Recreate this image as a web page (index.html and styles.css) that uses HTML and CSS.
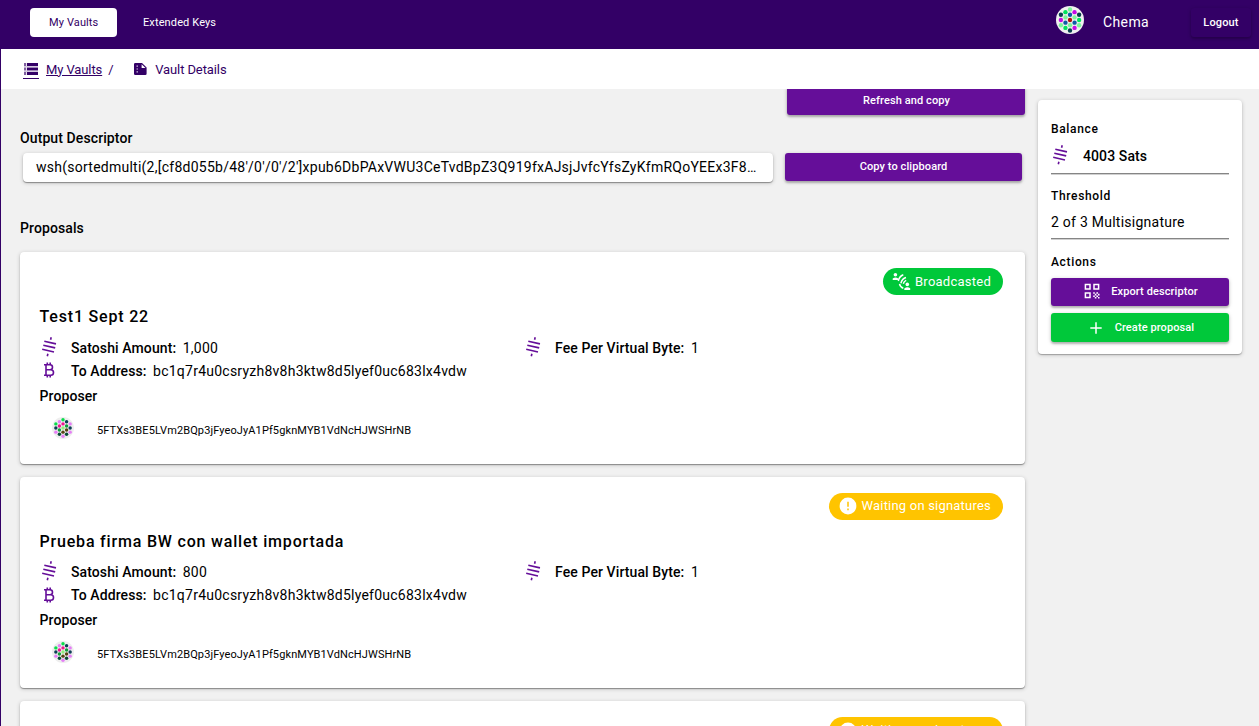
FILE: index.html
```html
<!DOCTYPE html>
<html lang="en">
<head>
<meta charset="utf-8">
<title>Vault Details</title>
<link rel="stylesheet" href="styles.css">
</head>
<body>
<svg class="defs" width="0" height="0">
  <symbol id="sats" viewBox="0 0 18 22"><path d="M11.200 1.300L10.600 3.800M4.300 5.200L16 7.900M3.300 9.200L15.200 11.900M2.200 13.200L14 16M7.900 17.700L7.300 20.300" fill="none" stroke="#650e99" stroke-width="1.600"/></symbol>
  <symbol id="btc" viewBox="0 0 12 16"><path d="M1 2.800H7a2.400 2.400 0 0 1 0 5H3M3 7.800H7.800a2.700 2.700 0 0 1 0 5.400H1M3 2.800V13.200M4.300 .6V2.800M7.200 .6V2.800M4.300 13.200V15.400M7.200 13.200V15.400" fill="none" stroke="#650e99" stroke-width="1.600"/></symbol>
  <symbol id="warn" viewBox="0 0 18 18"><circle cx="9" cy="9" r="8.400" fill="#fff"/><path d="M9 4.800V9.800M9 11.500V13.200" stroke="#ffc400" stroke-width="1.500"/></symbol>
  <symbol id="proposer" viewBox="0 0 64 64">
    <circle cx="32" cy="32" r="32" fill="#eee"/>
    <g fill="#0bdc4c"><circle cx="32" cy="8" r="5"/><circle cx="11.200" cy="20" r="5"/></g>
    <g fill="#e57ef5"><circle cx="21.600" cy="14" r="5"/><circle cx="52.800" cy="20" r="5"/><circle cx="11.200" cy="44" r="5"/><circle cx="52.800" cy="44" r="5"/><circle cx="32" cy="56" r="5"/></g>
    <g fill="#f01690"><circle cx="32" cy="20" r="5"/><circle cx="21.600" cy="26" r="5"/></g>
    <g fill="#0c3f55"><circle cx="42.400" cy="14" r="5"/><circle cx="11.200" cy="32" r="5"/><circle cx="52.800" cy="32" r="5"/></g>
    <g fill="#129c3c"><circle cx="42.400" cy="26" r="5"/><circle cx="21.600" cy="38" r="5"/></g>
    <circle cx="32" cy="32" r="5" fill="#92ee79"/>
    <g fill="#574414"><circle cx="42.400" cy="38" r="5"/><circle cx="32" cy="44" r="5"/></g>
    <g fill="#0a4936"><circle cx="21.600" cy="50" r="5"/><circle cx="42.400" cy="50" r="5"/></g>
  </symbol>
</svg>
<div class="app">
  <header class="topbar">
    <nav class="tabs"><a class="tab active">My Vaults</a><a class="tab">Extended Keys</a></nav>
    <div class="account">
      <svg class="avatar" viewBox="0 0 64 64">
        <circle cx="32" cy="32" r="32" fill="#f0f0f0"/>
        <g fill="#7cf59b"><circle cx="32" cy="8" r="5"/><circle cx="21.600" cy="26" r="5"/><circle cx="42.400" cy="26" r="5"/><circle cx="32" cy="44" r="5"/><circle cx="11.200" cy="44" r="5"/><circle cx="52.800" cy="44" r="5"/></g>
        <g fill="#0a5ca5"><circle cx="32" cy="20" r="5"/><circle cx="21.600" cy="38" r="5"/><circle cx="42.400" cy="38" r="5"/></g>
        <circle cx="32" cy="32" r="5" fill="#b01208"/>
        <g fill="#07404d"><circle cx="11.200" cy="20" r="5"/><circle cx="52.800" cy="20" r="5"/><circle cx="32" cy="56" r="5"/></g>
        <g fill="#c60be5"><circle cx="42.400" cy="14" r="5"/><circle cx="11.200" cy="32" r="5"/><circle cx="42.400" cy="50" r="5"/></g>
        <g fill="#00e45d"><circle cx="21.600" cy="14" r="5"/><circle cx="52.800" cy="32" r="5"/><circle cx="21.600" cy="50" r="5"/></g>
      </svg>
      <span class="username">Chema</span>
      <button class="logout">Logout</button>
    </div>
  </header>
  <div class="crumbs">
    <a class="crumb-icon"><svg width="14" height="12" viewBox="0 0 14 12"><path d="M0 0h2.200v3H0zM0 4.500h2.200v3H0zM0 9h2.200v3H0z" fill="#7f5f9f"/><path d="M3 0h11v3H3zM3 4.500h11v3H3zM3 9h11v3H3z" fill="#330066"/><path d="M0 3.750H14M0 8.250H14" stroke="#b9a6cb" stroke-width=".8"/></svg></a>
    <a class="crumb-link">My Vaults</a>
    <span class="slash">/</span>
    <svg class="doc" width="13" height="12" viewBox="0 0 13 12"><path d="M1.300 0H8L12.600 4.500V10.700A1.300 1.300 0 0 1 11.300 12H1.300A1.300 1.300 0 0 1 0 10.700V1.300A1.300 1.300 0 0 1 1.300 0Z" fill="#330066"/><path d="M7.600 1.300V5H11.500Z" fill="#fff"/><path d="M2.500 3.100H4M2.500 6H4M2.500 8.900H4" stroke="#c9bbda" stroke-width="1.200"/></svg>
    <span class="crumb-current">Vault Details</span>
  </div>
  <div class="page">
    <main class="main">
      <button class="btn refresh">Refresh and copy</button>
      <h2 class="label">Output Descriptor</h2>
      <div class="descriptor">
        <div class="field">wsh(sortedmulti(2,[cf8d055b/48'/0'/0'/2']xpub6DbPAxVWU3CeTvdBpZ3Q919fxAJsjJvfcYfsZyKfmRQoYEEx3F8…</div>
        <button class="btn copy">Copy to clipboard</button>
      </div>
      <h2 class="label proposals">Proposals</h2>
      <section class="card">
        <div class="badge-row"><span class="badge done">
          <svg width="19" height="19" viewBox="0 0 19 19"><g fill="#fff"><circle cx="3.400" cy="2.700" r="1.800"/><path d="M.7 8V6.600Q3.400 4.500 6.200 6.400V8Z"/><circle cx="15.300" cy="12.400" r="1.800"/><path d="M12.300 18V16.400Q15.300 14.200 18.200 16.200V18Z"/></g><path d="M11.300 2.800Q7.200 4.400 6.300 9M14 5.600Q10.200 6.600 8.900 11.200M14.200 8.400Q12 9.200 11.300 11.800M7.500 11.800Q8.200 15 11.300 16.200" fill="none" stroke="#fff" stroke-width="1.500"/></svg>
          Broadcasted</span></div>
        <h3 class="title">Test1 Sept 22</h3>
        <div class="row">
          <div class="cell"><svg class="sats"><use href="#sats"/></svg><b>Satoshi Amount:</b><span class="value">1,000</span></div>
          <div class="cell"><svg class="sats"><use href="#sats"/></svg><b>Fee Per Virtual Byte:</b><span class="value">1</span></div>
        </div>
        <div class="row"><div class="cell"><svg class="btc"><use href="#btc"/></svg><b>To Address:</b><span class="value">bc1q7r4u0csryzh8v8h3ktw8d5lyef0uc683lx4vdw</span></div></div>
        <div class="by">Proposer</div>
        <div class="proposer"><svg class="ident"><use href="#proposer"/></svg><span>5FTXs3BE5LVm2BQp3jFyeoJyA1Pf5gknMYB1VdNcHJWSHrNB</span></div>
      </section>
      <section class="card">
        <div class="badge-row"><span class="badge waiting"><svg width="18" height="18"><use href="#warn"/></svg><span class="lift">Waiting on signatures</span></span></div>
        <h3 class="title">Prueba firma BW con wallet importada</h3>
        <div class="row">
          <div class="cell"><svg class="sats"><use href="#sats"/></svg><b>Satoshi Amount:</b><span class="value">800</span></div>
          <div class="cell"><svg class="sats"><use href="#sats"/></svg><b>Fee Per Virtual Byte:</b><span class="value">1</span></div>
        </div>
        <div class="row"><div class="cell"><svg class="btc"><use href="#btc"/></svg><b>To Address:</b><span class="value">bc1q7r4u0csryzh8v8h3ktw8d5lyef0uc683lx4vdw</span></div></div>
        <div class="by">Proposer</div>
        <div class="proposer"><svg class="ident"><use href="#proposer"/></svg><span>5FTXs3BE5LVm2BQp3jFyeoJyA1Pf5gknMYB1VdNcHJWSHrNB</span></div>
      </section>
      <section class="card">
        <div class="badge-row"><span class="badge waiting"><svg width="18" height="18"><use href="#warn"/></svg><span class="lift">Waiting on signatures</span></span></div>
      </section>
    </main>
    <aside class="side">
      <h4 class="side-label">Balance</h4>
      <div class="balance"><svg class="sats"><use href="#sats"/></svg><strong>4003 Sats</strong></div>
      <hr class="rule">
      <h4 class="side-label mid">Threshold</h4>
      <div class="threshold">2 of 3 Multisignature</div>
      <hr class="rule">
      <h4 class="side-label">Actions</h4>
      <button class="btn export"><svg width="16" height="16" viewBox="0 0 16 16"><path d="M1.400 1.400H6V6H1.400ZM10 1.400H14.600V6H10ZM1.400 10H6V14.600H1.400Z" fill="none" stroke="#fff" stroke-width="1.500"/><path d="M9.200 9.200h1.600v1.600H9.200zM12.400 9.200H14v1.600h-1.600zM10.800 10.800h1.600v1.600h-1.600zM14 10.800h1.500v1.600H14zM9.200 12.400h1.600V14H9.200zM12.400 12.400H14V14h-1.600zM10.800 14h1.600v1.500h-1.600zM14 14h1.500v1.500H14z" fill="#fff"/></svg>Export descriptor</button>
      <button class="btn create"><svg width="12" height="12" viewBox="0 0 12 12"><path d="M6 .3V11.700M.3 6H11.700" stroke="#fff" stroke-width="1.500"/></svg>Create proposal</button>
    </aside>
  </div>
</div>
</body>
</html>
```
FILE: styles.css
```css
* { box-sizing: border-box; }
body { margin: 0; font-family: Roboto, "Liberation Sans", sans-serif; color: #000; }
button { border: 0; font-family: inherit; }
h2, h3, h4 { margin: 0; font-weight: 500; }
.defs { display: none; }
.app { height: 726px; overflow: hidden; display: flex; flex-direction: column; background: #f1f1f1; border-left: 1px solid #330066; }

.topbar { height: 49px; flex: none; background: #330066; display: flex; justify-content: space-between; color: #fff; }
.tabs { display: flex; padding: 8px 0 0 29px; gap: 7px; }
.tab { height: 29px; line-height: 29px; padding: 0 19px; font-size: 11px; letter-spacing: .12px; border-radius: 4px; white-space: nowrap; }
.tab.active { width: 87px; background: #fff; color: #330066; }
.account { display: flex; align-items: flex-start; padding-right: 8px; }
.avatar { width: 28px; height: 28px; margin-top: 6px; }
.username { margin-left: 19px; width: 88px; line-height: 44px; font-size: 14px; letter-spacing: .4px; }
.logout { margin-top: 8px; width: 60px; height: 29px; padding: 0; border-radius: 3px; background: #330066; color: #fff; font-size: 11px; font-weight: 500; letter-spacing: .15px; box-shadow: 0 1px 4px rgba(0,0,0,.2), 0 2px 2px rgba(0,0,0,.14); }

.crumbs { height: 40px; flex: none; background: #fff; display: flex; align-items: center; padding: 1px 0 0 22px; color: #330066; font-size: 13px; line-height: 20px; letter-spacing: -.1px; }
.crumb-icon { display: flex; justify-content: center; width: 16px; height: 16px; margin-top: 2px; border-bottom: 1px solid #330066; }
.crumb-link { margin-left: 7px; text-decoration: underline; }
.slash { margin-left: 6px; width: 26px; }
.doc { margin-right: 8px; margin-top: -2px; }

.page { flex: 1; min-height: 0; display: flex; align-items: flex-start; padding-left: 19px; gap: 13px; overflow: hidden; }
.main { width: 1005px; display: flex; flex-direction: column; }
.btn { padding: 0; border-radius: 3px; background: #650e99; color: #fff; font-size: 11px; font-weight: 500; letter-spacing: .1px; box-shadow: 0 1px 4px rgba(0,0,0,.2), 0 2px 2px rgba(0,0,0,.2); }
.refresh { align-self: flex-end; width: 238px; height: 29px; margin-top: -3px; padding-left: 1px; }
.label { font-size: 14px; line-height: 20px; letter-spacing: .1px; margin-top: 13px; }
.descriptor { display: flex; gap: 12px; padding-left: 3px; margin-top: 5px; }
.field { width: 750px; height: 29px; padding: 0 13px; border-radius: 4px; background: #fff; font-size: 14px; line-height: 28px; letter-spacing: .25px; white-space: nowrap; box-shadow: 0 1px 4px rgba(0,0,0,.2), 0 1px 1px rgba(0,0,0,.35); }
.copy { width: 237px; height: 28px; padding: 0 0 2px; }
.proposals { margin-top: 36px; margin-bottom: 14px; }

.card { height: 211.500px; margin-bottom: 13px; padding: 16px 22px 0 19.500px; border-radius: 4px; background: #fff; flex: none; box-shadow: 0 1px 4px rgba(0,0,0,.2), 0 1px 1px rgba(0,0,0,.35); }
.badge-row { display: flex; justify-content: flex-end; }
.badge { display: flex; align-items: center; height: 27px; border-radius: 14px; color: #fff; font-size: 13px; letter-spacing: .25px; white-space: nowrap; }
.done { width: 120px; padding-left: 9px; gap: 4px; background: #00c83a; }
.waiting { width: 174px; padding-left: 9.500px; gap: 5px; background: #ffc400; letter-spacing: .2px; }
.lift { padding-bottom: 2px; }
.title { font-size: 16px; line-height: 24px; letter-spacing: .81px; margin-top: 10px; }
.row { display: flex; font-size: 14px; height: 23px; }
.title + .row { margin-top: 7px; }
.cell { display: flex; align-items: center; flex: none; width: 484px; white-space: nowrap; letter-spacing: .1px; }
.cell b { font-weight: 500; }
.sats { width: 18px; height: 22px; margin-right: 13.500px; margin-top: -2px; flex: none; }
.btc { width: 12px; height: 16px; margin: -1px 16px 0 3.500px; flex: none; }
.value { margin-left: 6.500px; letter-spacing: .24px; }
.by { font-size: 14px; font-weight: 500; line-height: 20px; letter-spacing: .1px; margin-top: 3.500px; }
.proposer { display: flex; align-items: center; height: 22px; margin: 13.500px 0 0 12.500px; font-size: 11px; letter-spacing: .11px; }
.ident { width: 22px; height: 22px; margin-right: 23px; margin-top: -5px; }

.side { width: 204px; height: 254px; margin-top: 11px; padding: 19px 13px 0; border-radius: 4px; background: #fff; box-shadow: 0 1px 4px rgba(0,0,0,.2), 0 1px 1px rgba(0,0,0,.25); display: flex; flex-direction: column; }
.side-label { font-size: 12px; line-height: 20px; letter-spacing: .65px; }
.mid { margin-top: -1px; }
.balance { display: flex; align-items: center; height: 24px; margin-top: 5px; font-size: 14px; letter-spacing: .1px; }
.balance .sats { margin-right: 14px; }
.balance strong { font-weight: 500; }
.rule { width: 100%; height: 2px; margin: 5px 0 12px; border: 0; border-top: 1px solid #858585; border-bottom: 1px solid #d0d0d0; flex: none; }
.threshold { font-size: 14px; line-height: 20px; letter-spacing: .25px; margin: 6px 0 1px; }
.export, .create { display: flex; align-items: center; justify-content: center; width: 178px; height: 28px; margin-top: 6px; padding: 0 0 2px 2px; flex: none; gap: 11px; }
.create { height: 29px; margin-top: 7px; padding: 0 0 0 4px; background: #00c83a; gap: 13px; }
```
